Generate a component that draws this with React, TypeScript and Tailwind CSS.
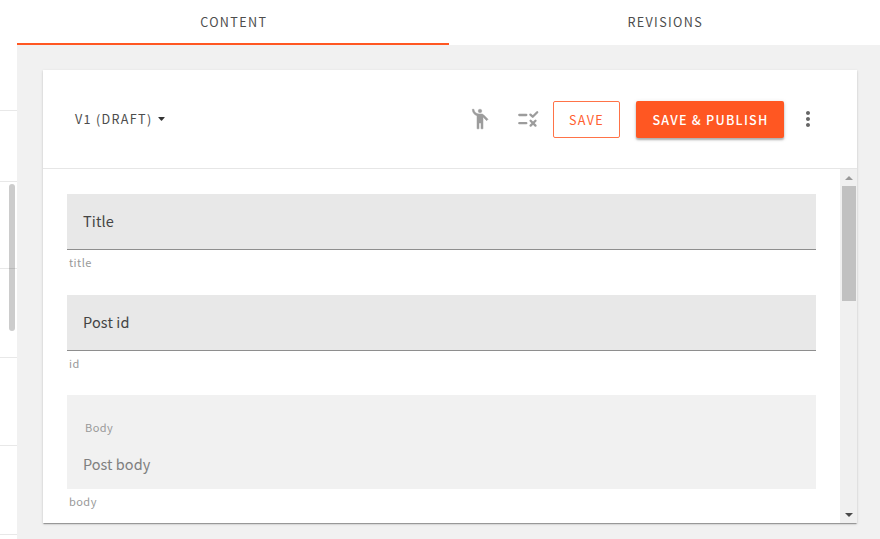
import { MdMoreVert } from "react-icons/md";

function PersonIcon() {
  return (
    <svg className="mr-6 size-6" viewBox="0 0 24 24" fill="#9c9c9c" stroke="#9c9c9c" strokeWidth="0.5" strokeLinejoin="round">
      <circle cx="12" cy="4" r="1.8" />
      <path d="M15.89 8.11C15.5 7.72 14.83 7 13.53 7h-2.54C8.24 6.99 6 4.75 6 2.3H4.3c0 3.16 1.81 5.54 4.7 6.41V21.8h2v-5.8h2v5.8h2V10.05L18.65 13.7l1.41-1.41-4.17-4.18z" />
    </svg>
  );
}

function RuleIcon() {
  return (
    <svg
      className="mr-[13px] size-6"
      viewBox="0 0 24 24"
      fill="none"
      stroke="#9c9c9c"
      strokeWidth="2.3"
      strokeLinecap="round"
      strokeLinejoin="round"
    >
      <path d="M3.3 8h7M3.3 16.2h7M14.4 7.6l2.3 2.1 4.5-4.5M14.6 13.7l4.9 4.9M19.5 13.7l-4.9 4.9" />
    </svg>
  );
}

function Tab({ label, active }: { label: string; active?: boolean }) {
  return (
    <div
      className={`flex h-[45px] flex-1 justify-center pt-[12px] pl-[2px] text-[12.6px] leading-[20px] tracking-[1.36px] text-[#4d4d4d] ${
        active ? "border-b-2 border-[#ff5722]" : ""
      }`}
    >
      {label}
    </div>
  );
}

function Field({ label, helper }: { label: string; helper: string }) {
  return (
    <div className="h-[101px]">
      <div className="flex h-[56px] items-center border-b border-[#8e8e8e] bg-[#e8e8e8] px-4 pb-[2px] text-[14.5px] leading-[20px] tracking-[0.12px] text-[#444]">
        {label}
      </div>
      <div className="pt-[2px] pl-[2px] text-[11px] leading-[20px] tracking-[0.45px] text-[#999]">{helper}</div>
    </div>
  );
}

function Sidebar() {
  return (
    <div className="relative h-full w-[17px] shrink-0 overflow-hidden bg-white">
      <div className="h-[111px] border-b border-[#e8e8e8]" />
      <div className="h-[71px] border-b border-[#e8e8e8]" />
      <div className="h-[87px] border-b border-[#e8e8e8]" />
      <div className="h-[89px] border-b border-[#e8e8e8]" />
      <div className="h-[88px] border-b border-[#e8e8e8]" />
      <div className="h-[89px] border-b border-[#e8e8e8]" />
      <div className="absolute top-[184px] left-[9px] h-[147px] w-[6px] rounded-full bg-black/20" />
    </div>
  );
}

function Scrollbar() {
  return (
    <div className="flex w-[17px] shrink-0 flex-col items-center bg-[#f0f0f0]">
      <div className="flex h-[17px] items-center">
        <svg width="8" height="4" viewBox="0 0 8 4" fill="#999">
          <path d="M0 4 4 0l4 4z" />
        </svg>
      </div>
      <div className="h-[115px] w-[14px] bg-[#c1c1c1]" />
      <div className="flex-1" />
      <div className="flex h-[17px] items-center">
        <svg width="8" height="4" viewBox="0 0 8 4" fill="#4a4a4a">
          <path d="M0 0h8L4 4z" />
        </svg>
      </div>
    </div>
  );
}

export default function App() {
  return (
    <div className="flex h-[539px] w-[880px] overflow-hidden bg-[#f1f1f1] font-['Noto_Sans_CJK_SC',sans-serif]">
      <Sidebar />
      <main className="flex min-w-0 flex-1 flex-col">
        <div className="flex h-[45px] bg-white">
          <Tab label="CONTENT" active />
          <Tab label="REVISIONS" />
        </div>
        <section className="mt-[25px] ml-[26px] flex h-[453px] w-[814px] flex-col bg-white shadow-[0_2px_1px_-1px_rgba(0,0,0,0.2),0_1px_1px_0_rgba(0,0,0,0.14),0_1px_3px_0_rgba(0,0,0,0.12)]">
          <header className="flex h-[99px] shrink-0 items-center border-b border-[#e6e6e6] pl-8">
            <div className="flex items-center text-[12.6px] leading-[20px] tracking-[1.32px] text-[#4d4d4d]">
              V1 (DRAFT)
              <svg className="ml-[5px]" width="7" height="4" viewBox="0 0 7 4" fill="#333">
                <path d="M0.7 0h5.6q.7 0 .3.6L4 3.6q-.5.5-1 0L.4.6Q0 0 .7 0z" />
              </svg>
            </div>
            <div className="mr-[37px] ml-auto flex items-center">
              <PersonIcon />
              <RuleIcon />
              <button className="mr-4 h-[37px] w-[67px] rounded-[2px] border border-[#ff7347] pt-px text-[12.6px] leading-[20px] tracking-[1.36px] text-[#ff6030]">
                SAVE
              </button>
              <button className="mr-3 h-[37px] w-[148px] rounded-[2px] bg-[#ff5722] pt-px pl-px text-[12.6px] leading-[20px] font-medium tracking-[1.25px] text-white shadow-[0_2px_2px_rgba(0,0,0,0.25),0_1px_4px_rgba(0,0,0,0.15)]">
                SAVE &amp; PUBLISH
              </button>
              <MdMoreVert className="size-6 text-[#666]" />
            </div>
          </header>
          <div className="flex min-h-0 flex-1">
            <div className="min-w-0 flex-1 overflow-hidden px-6 pt-[25px]">
              <Field label="Title" helper="title" />
              <Field label="Post id" helper="id" />
              <div className="-mt-px h-[94px] bg-[#f1f1f1] px-4 pt-[22px]">
                <div className="pl-[2px] text-[11px] leading-[20px] tracking-[0.45px] text-[#999]">Body</div>
                <div className="mt-[17px] text-[14.5px] leading-[20px] tracking-[0.02px] text-[#808080]">Post body</div>
              </div>
              <div className="pt-[2px] pl-[2px] text-[11px] leading-[20px] tracking-[0.45px] text-[#999]">body</div>
            </div>
            <Scrollbar />
          </div>
        </section>
      </main>
    </div>
  );
}
